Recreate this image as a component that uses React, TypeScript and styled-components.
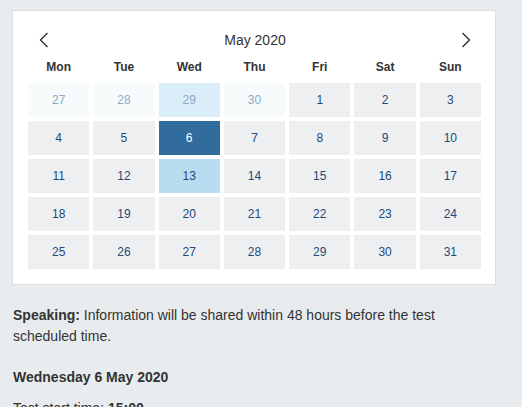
import styled, { createGlobalStyle } from "styled-components";

const GlobalStyle = createGlobalStyle`
  html, body {
    margin: 0;
    padding: 0;
    background: #e9ecee;
    font-family: "Liberation Sans", Arial, sans-serif;
    color: #333333;
  }
`;

const Page = styled.div`
  padding: 10px 26px 0 12px;
`;

const Card = styled.div`
  background: #ffffff;
  border: 1px solid #dcdfe1;
  padding: 14px 14px 15px 15px;
`;

const Header = styled.div`
  display: flex;
  align-items: center;
  justify-content: space-between;
  height: 30px;
  padding: 0 9px 0 10px;
`;

const NavButton = styled.button`
  border: none;
  background: none;
  padding: 0;
  width: 12px;
  height: 18px;
  display: flex;
  align-items: center;
  justify-content: center;
  cursor: pointer;
`;

const Title = styled.div`
  font-size: 14px;
  color: #333333;
`;

const Grid = styled.div`
  display: grid;
  grid-template-columns: repeat(7, 1fr);
  column-gap: 4px;
  row-gap: 4px;
`;

const WeekDay = styled.div`
  font-size: 12px;
  font-weight: bold;
  color: #333333;
  text-align: center;
  height: 24px;
  line-height: 24px;
`;

type DayKind = "outside" | "outsideHover" | "normal" | "selected" | "highlight";

const Day = styled.div<{ $kind: DayKind }>`
  height: 34px;
  display: flex;
  align-items: center;
  justify-content: center;
  font-size: 12px;
  background: ${(p) =>
    p.$kind === "selected"
      ? "#326c9d"
      : p.$kind === "highlight"
      ? "#b8ddf1"
      : p.$kind === "outsideHover"
      ? "#dbedf8"
      : p.$kind === "outside"
      ? "#f8fbfc"
      : "#eeeff1"};
  color: ${(p) =>
    p.$kind === "selected"
      ? "#ffffff"
      : p.$kind === "outside" || p.$kind === "outsideHover"
      ? "#8ba9c7"
      : "#1d4a7a"};
`;

const Info = styled.div`
  padding: 20px 0 0 1px;
  font-size: 14px;
  line-height: 21px;
`;

const Para = styled.p`
  margin: 0 0 20px;
`;

const DateHeading = styled.p`
  margin: 0 0 10px;
  font-weight: bold;
`;

const Chevron = ({ dir }: { dir: "left" | "right" }) => (
  <svg width="10" height="16" viewBox="0 0 10 16">
    <path
      d={dir === "left" ? "M8.5 1 L1.5 8 L8.5 15" : "M1.5 1 L8.5 8 L1.5 15"}
      fill="none"
      stroke="#333"
      strokeWidth="1.4"
    />
  </svg>
);

const weekdays = ["Mon", "Tue", "Wed", "Thu", "Fri", "Sat", "Sun"];

const days: { n: number; kind: DayKind }[] = [
  { n: 27, kind: "outside" },
  { n: 28, kind: "outside" },
  { n: 29, kind: "outsideHover" },
  { n: 30, kind: "outside" },
  ...Array.from({ length: 31 }, (_, i) => ({
    n: i + 1,
    kind: (i + 1 === 6 ? "selected" : i + 1 === 13 ? "highlight" : "normal") as DayKind,
  })),
];

const App = () => {
  return (
    <Page>
      <GlobalStyle />
      <Card>
        <Header>
          <NavButton>
            <Chevron dir="left" />
          </NavButton>
          <Title>May 2020</Title>
          <NavButton>
            <Chevron dir="right" />
          </NavButton>
        </Header>
        <Grid>
          {weekdays.map((w) => (
            <WeekDay key={w}>{w}</WeekDay>
          ))}
          {days.map((d, i) => (
            <Day key={i} $kind={d.kind}>
              {d.n}
            </Day>
          ))}
        </Grid>
      </Card>
      <Info>
        <Para>
          <b>Speaking:</b> Information will be shared within 48 hours before the test
          scheduled time.
        </Para>
        <DateHeading>Wednesday 6 May 2020</DateHeading>
        <Para>
          Test start time: <b>15:00</b>
        </Para>
      </Info>
    </Page>
  );
};

export default App;
